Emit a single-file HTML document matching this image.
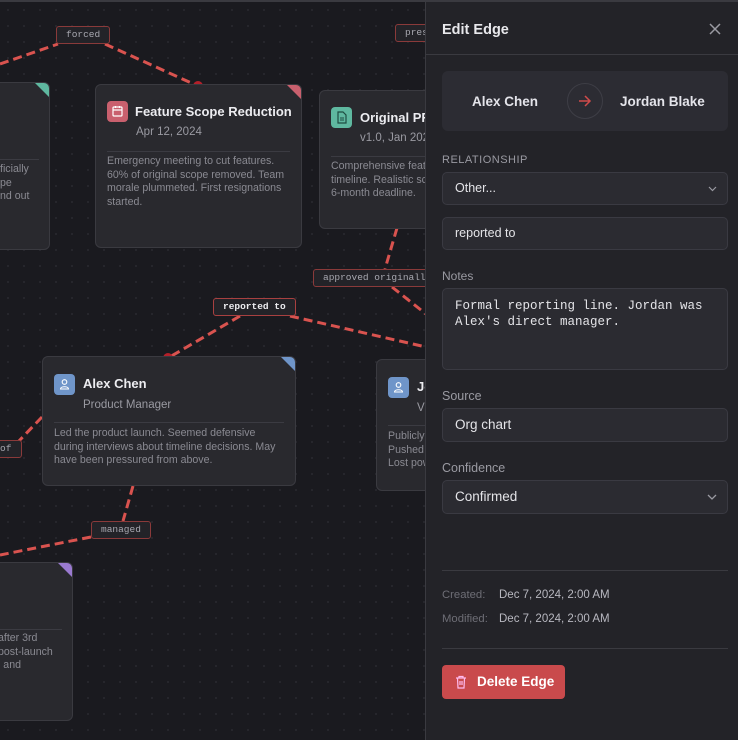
<!DOCTYPE html>
<html><head><meta charset="utf-8"><style>
*{box-sizing:border-box;margin:0;padding:0}
body{width:738px;height:740px;overflow:hidden;background:#1a1a1f;font-family:"Liberation Sans",sans-serif;position:relative}
.canvas{position:absolute;left:0;top:0;width:426px;height:740px;background-color:#1a1a1f;background-image:radial-gradient(#2a2a30 1px,transparent 1px);background-size:16px 16px;overflow:hidden;border-top:2px solid #3a3a40}
.card{position:absolute;background:#29292e;border:1px solid #3a3a40;border-radius:6px;overflow:hidden}
.corner{position:absolute;right:0;top:0;width:0;height:0;border-top:14px solid;border-left:14px solid transparent}
.ic{position:absolute;width:21px;height:21px;border-radius:4px}
.tt{position:absolute;color:#ececf0;font-weight:bold;font-size:13px;white-space:nowrap}
.st{position:absolute;color:#9a9aa2;font-size:11.5px;white-space:nowrap}
.dv{position:absolute;height:1px;background:#3b3b42}
.tx{position:absolute;color:#8a8a92;font-size:10.6px;line-height:13.7px;white-space:nowrap}
.lb{position:absolute;height:18px;border:1px solid #8a3a3a;background:#232328;border-radius:3px;color:#a8a8b0;font-family:"Liberation Mono",monospace;font-size:9.5px;line-height:16px;padding:0 9px;white-space:nowrap;overflow:hidden}
.panel{position:absolute;left:425px;top:0;width:313px;height:740px;background:#232328;border-left:1px solid #3a3a40;border-top:2px solid #3a3a40}
.p{position:absolute;color:#e8e8ec}
.fld{position:absolute;left:16px;width:286px;background:#2b2b31;border:1px solid #3a3a42;border-radius:5px;color:#e4e4e8;font-size:13px;padding-left:12px}
.lab{position:absolute;left:16px;color:#9a9aa2;font-size:12px}
</style></head><body>
<div class="canvas">
<svg width="426" height="740" style="position:absolute;left:0;top:0">
<g stroke="#d9534f" stroke-width="3" stroke-dasharray="9,5" fill="none">
<path d="M0 62 L58 42"/><path d="M105 42 L198 84"/>
<path d="M397 226 L385 267"/><path d="M392 285 L426 312"/>
<path d="M240 314 L168 356"/><path d="M290 314 L426 345"/>
<path d="M42 415 L18 440"/><path d="M133 484 L123 519"/><path d="M91 535 L0 553"/>
</g>
<circle cx="198" cy="84" r="5" fill="#b3202a"/><circle cx="168" cy="356" r="5" fill="#b3202a"/>
</svg>
<div class="lb" style="left:56px;top:24px">forced</div>
<div class="lb" style="left:395px;top:22px;width:40px">pres</div>
<div class="lb" style="left:313px;top:267px;width:125px">approved originally</div>
<div class="lb" style="left:213px;top:296px;color:#ececf0;font-weight:bold;border-color:#a84040">reported to</div>
<div class="lb" style="left:-10px;top:438px;width:32px">of</div>
<div class="lb" style="left:91px;top:519px">managed</div>

<div class="card" style="left:-160px;top:80px;width:210px;height:168px"><div class="corner" style="border-top-color:#5fb8a0"></div>
<div class="dv" style="left:20px;right:10px;top:76px"></div></div>
<div class="tx" style="left:0px;top:161px">ficially<br>pe<br>nd out</div>

<div class="card" style="left:95px;top:82px;width:207px;height:164px"><div class="corner" style="border-top-color:#c9606e"></div>
<div class="ic" style="left:11px;top:16px;background:#c9606e"><svg width="21" height="21"><rect x="6" y="6" width="9" height="9" fill="none" stroke="#fff" stroke-width="1.2" rx="1"/><path d="M6 9h9M8.5 5v2M12.5 5v2" stroke="#fff" stroke-width="1.2"/></svg></div>
<div class="tt" style="left:39px;top:19px">Feature Scope Reduction</div>
<div class="st" style="left:40px;top:41px">Apr 12, 2024</div>
<div class="dv" style="left:11px;right:11px;top:66px"></div>
<div class="tx" style="left:11px;top:70px">Emergency meeting to cut features.<br>60% of original scope removed. Team<br>morale plummeted. First resignations<br>started.</div></div>

<div class="card" style="left:319px;top:88px;width:140px;height:139px">
<div class="ic" style="left:11px;top:16px;background:#5fb8a0"><svg width="21" height="21"><path d="M7 5h5l3 3v8H7z" fill="none" stroke="#1f4d42" stroke-width="1.2"/><path d="M9 11h4M9 13h4" stroke="#1f4d42"/></svg></div>
<div class="tt" style="left:40px;top:19px">Original PRD</div>
<div class="st" style="left:40px;top:41px">v1.0, Jan 2024</div>
<div class="dv" style="left:11px;right:0;top:65px"></div>
<div class="tx" style="left:11px;top:69px">Comprehensive feature<br>timeline. Realistic scope<br>6-month deadline.</div></div>

<div class="card" style="left:42px;top:354px;width:254px;height:130px"><div class="corner" style="border-top-color:#6f95c9"></div>
<div class="ic" style="left:11px;top:17px;background:#6f95c9"><svg width="21" height="21"><circle cx="10.5" cy="8" r="2.3" fill="none" stroke="#fff" stroke-width="1.1"/><path d="M6.5 15c0-3 8-3 8 0z" fill="none" stroke="#fff" stroke-width="1.1"/></svg></div>
<div class="tt" style="left:40px;top:19px">Alex Chen</div>
<div class="st" style="left:40px;top:42px">Product Manager</div>
<div class="dv" style="left:11px;right:11px;top:65px"></div>
<div class="tx" style="left:11px;top:70px">Led the product launch. Seemed defensive<br>during interviews about timeline decisions. May<br>have been pressured from above.</div></div>

<div class="card" style="left:376px;top:357px;width:100px;height:132px">
<div class="ic" style="left:11px;top:17px;background:#6f95c9"><svg width="21" height="21"><circle cx="10.5" cy="8" r="2.3" fill="none" stroke="#fff" stroke-width="1.1"/><path d="M6.5 15c0-3 8-3 8 0z" fill="none" stroke="#fff" stroke-width="1.1"/></svg></div>
<div class="tt" style="left:40px;top:19px">Jordan</div>
<div class="st" style="left:40px;top:42px">VP</div>
<div class="dv" style="left:11px;right:0;top:65px"></div>
<div class="tx" style="left:11px;top:70px">Publicly<br>Pushed<br>Lost power</div></div>

<div class="card" style="left:-140px;top:560px;width:213px;height:159px"><div class="corner" style="border-top-color:#9a7ad0"></div>
<div class="dv" style="left:20px;right:10px;top:66px"></div></div>
<div class="tx" style="left:-2px;top:630px">after 3rd<br>post-launch<br>l and</div>
</div>

<div class="panel">
<div class="p" style="left:16px;top:20px;font-size:14.5px;font-weight:bold">Edit Edge</div>
<svg style="position:absolute;left:283px;top:21px" width="12" height="12"><path d="M1 1L11 11M11 1L1 11" stroke="#9a9aa2" stroke-width="1.5"/></svg>
<div style="position:absolute;left:0;right:0;top:52px;height:1px;background:#3a3a40"></div>
<div style="position:absolute;left:16px;top:69px;width:286px;height:60px;background:#2c2c33;border-radius:6px">
<div class="p" style="left:30px;top:23px;font-size:13.5px;font-weight:bold;color:#e4e4ea">Alex Chen</div>
<div style="position:absolute;left:125px;top:12px;width:36px;height:36px;border:1px solid #3e3e46;border-radius:50%"></div>
<svg style="position:absolute;left:136px;top:23px" width="14" height="14"><path d="M1 7H12M7 2L12 7L7 12" fill="none" stroke="#d04b4b" stroke-width="1.5"/></svg>
<div class="p" style="left:178px;top:23px;font-size:13.5px;font-weight:bold;color:#e4e4ea">Jordan Blake</div></div>
<div class="lab" style="top:152px;font-size:11px;letter-spacing:0.5px">RELATIONSHIP</div>
<div class="fld" style="top:170px;height:33px;line-height:31px;font-size:12.5px">Other...<svg style="position:absolute;right:10px;top:13px" width="9" height="6"><path d="M1 1L4.5 4.5L8 1" fill="none" stroke="#9a9aa2" stroke-width="1.2"/></svg></div>
<div class="fld" style="top:215px;height:33px;line-height:31px;font-size:12.5px">reported to</div>
<div class="lab" style="top:267px">Notes</div>
<div class="fld" style="top:286px;height:82px;font-family:'Liberation Mono',monospace;font-size:12.5px;line-height:16px;padding-top:9px">Formal reporting line. Jordan was<br>Alex's direct manager.</div>
<div class="lab" style="top:387px;font-size:12.5px">Source</div>
<div class="fld" style="top:406px;height:34px;line-height:32px;font-size:13.5px">Org chart</div>
<div class="lab" style="top:459px;font-size:12.5px">Confidence</div>
<div class="fld" style="top:478px;height:34px;line-height:32px;font-size:13.5px">Confirmed<svg style="position:absolute;right:10px;top:13px" width="10" height="7"><path d="M1 1L5 5L9 1" fill="none" stroke="#9a9aa2" stroke-width="1.3"/></svg></div>
<div style="position:absolute;left:16px;width:286px;top:568px;height:1px;background:#3a3a40"></div>
<div class="p" style="left:16px;top:587px;font-size:11.3px;color:#6e6e76">Created:</div>
<div class="p" style="left:73px;top:587px;font-size:11.5px;color:#b8b8c0">Dec 7, 2024, 2:00 AM</div>
<div class="p" style="left:16px;top:611px;font-size:11.3px;color:#6e6e76">Modified:</div>
<div class="p" style="left:73px;top:611px;font-size:11.5px;color:#b8b8c0">Dec 7, 2024, 2:00 AM</div>
<div style="position:absolute;left:16px;width:286px;top:646px;height:1px;background:#3a3a40"></div>
<div style="position:absolute;left:16px;top:663px;width:123px;height:34px;background:#c94a4c;border-radius:4px">
<svg style="position:absolute;left:13px;top:10px" width="12" height="14"><path d="M1 3H11M4 3V1.5H8V3M2.5 3L3 13H9L9.5 3M5 6V10M7 6V10" fill="none" stroke="#fbe" stroke-width="1.2"/></svg>
<div class="p" style="left:35px;top:9px;font-size:13.5px;font-weight:bold;color:#fff">Delete Edge</div></div>
</div>
</body></html>
